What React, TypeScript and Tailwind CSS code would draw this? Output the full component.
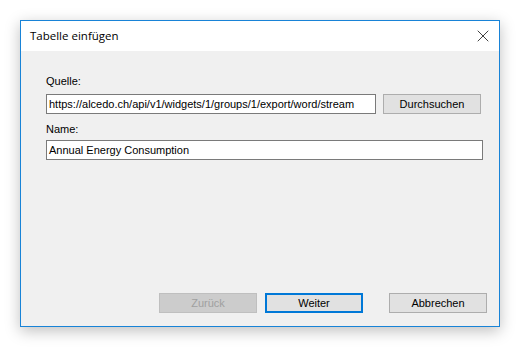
import { X } from 'lucide-react';

const ctl = "font-['Liberation_Sans',Arial,sans-serif] text-[11px] text-black";

function Btn({ label, variant }: { label: string; variant?: 'default' | 'disabled' }) {
  const base = 'w-[98px] h-[20px] flex items-center justify-center';
  if (variant === 'disabled') {
    return <div className={`${base} border border-[#bfbfbf] bg-[#cccccc] text-[#a0a0a0]`}>{label}</div>;
  }
  if (variant === 'default') {
    return <div className={`${base} border-2 border-[#0078d7] bg-[#e1e1e1]`}>{label}</div>;
  }
  return <div className={`${base} border border-[#adadad] bg-[#e1e1e1]`}>{label}</div>;
}

export default function App() {
  return (
    <div className="w-[520px] h-[347px] bg-white pt-[20px] pl-[20px]">
      <div className="w-[480px] h-[307px] flex flex-col border border-[#1883d7] bg-[#f0f0f0] shadow-[0_4px_14px_rgba(0,0,0,0.25)]">
        <div className="h-[30px] bg-white flex items-center justify-between pl-[9px] pr-[6px]">
          <span className="font-['Open_Sans','Noto_Sans',sans-serif] text-[11.5px] text-black">Tabelle einfügen</span>
          <X className="w-[20px] h-[20px] text-black" strokeWidth={0.9} />
        </div>
        <div className={`flex-1 flex flex-col pl-[25px] pr-[12px] pb-[13px] ${ctl}`}>
          <div className="mt-[24px] h-[13px] leading-[13px]">Quelle:</div>
          <div className="mt-[6px] flex gap-[7px]">
            <div className="w-[330px] h-[20px] border border-[#7a7a7a] bg-white px-[2px] flex items-center whitespace-nowrap overflow-hidden">
              https://alcedo.ch/api/v1/widgets/1/groups/1/export/word/stream
            </div>
            <Btn label="Durchsuchen" />
          </div>
          <div className="mt-[9px] h-[13px] leading-[13px]">Name:</div>
          <div className="mt-[4px] w-[437px] h-[20px] border border-[#7a7a7a] bg-white px-[2px] flex items-center">
            Annual Energy Consumption
          </div>
          <div className="mt-auto flex justify-end gap-[8px]">
            <Btn label="Zurück" variant="disabled" />
            <div className="mr-[18px]"><Btn label="Weiter" variant="default" /></div>
            <Btn label="Abbrechen" />
          </div>
        </div>
      </div>
    </div>
  );
}
